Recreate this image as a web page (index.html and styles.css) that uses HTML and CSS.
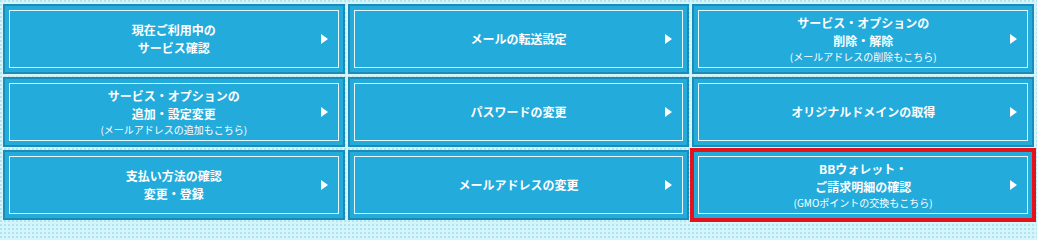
FILE: index.html
```html
<!DOCTYPE html>
<html lang="ja">
<head>
<meta charset="utf-8">
<title>メニュー</title>
<link rel="stylesheet" href="styles.css">
</head>
<body>
<div class="menu">
  <a class="btn" href="#"><span class="inner"><span class="label"><span class="main">現在ご利用中の<br>サービス確認</span></span><span class="arrow"></span></span></a>
  <a class="btn" href="#"><span class="inner"><span class="label"><span class="main">メールの転送設定</span></span><span class="arrow"></span></span></a>
  <a class="btn" href="#"><span class="inner"><span class="label"><span class="main">サービス・オプションの<br>削除・解除</span><span class="sub">(メールアドレスの削除もこちら)</span></span><span class="arrow"></span></span></a>
  <a class="btn" href="#"><span class="inner"><span class="label"><span class="main">サービス・オプションの<br>追加・設定変更</span><span class="sub">(メールアドレスの追加もこちら)</span></span><span class="arrow"></span></span></a>
  <a class="btn" href="#"><span class="inner"><span class="label"><span class="main">パスワードの変更</span></span><span class="arrow"></span></span></a>
  <a class="btn" href="#"><span class="inner"><span class="label"><span class="main">オリジナルドメインの取得</span></span><span class="arrow"></span></span></a>
  <a class="btn" href="#"><span class="inner"><span class="label"><span class="main">支払い方法の確認<br>変更・登録</span></span><span class="arrow"></span></span></a>
  <a class="btn" href="#"><span class="inner"><span class="label"><span class="main">メールアドレスの変更</span></span><span class="arrow"></span></span></a>
  <a class="btn btn-active" href="#"><span class="inner"><span class="label"><span class="main">BBウォレット・<br>ご請求明細の確認</span><span class="sub">(GMOポイントの交換もこちら)</span></span><span class="arrow"></span></span></a>
</div>
</body>
</html>
```

FILE: styles.css
```css
html, body {
  margin: 0;
  padding: 0;
}

html {
  background-color: #d3f5fb;
  background-image: radial-gradient(circle at 1px 1px, #b2e4f0 0.9px, transparent 1.1px);
  background-size: 4px 4px;
}

body {
  width: 1037px;
  height: 226px;
  overflow: hidden;
  font-family: "Noto Sans CJK JP", "Noto Sans", sans-serif;
}

.menu {
  box-sizing: border-box;
  height: 226px;
  display: grid;
  grid-template-columns: repeat(3, 1fr);
  grid-template-rows: repeat(3, 70px);
  gap: 3px;
  padding: 4px 3px 6px 3px;
}

.btn {
  display: block;
  box-sizing: border-box;
  border: 2px solid #1b8cb7;
  background: #23abdc;
  padding: 4px;
  color: #ffffff;
  text-decoration: none;
}

.btn-active {
  outline: 4px solid #e5121c;
  outline-offset: -2px;
  position: relative;
  z-index: 1;
}

.inner {
  box-sizing: border-box;
  height: 100%;
  border: 1px solid #e6f7fc;
  display: grid;
  grid-template-columns: 30px 1fr 30px;
  align-items: center;
}

.label {
  grid-column: 2;
  display: flex;
  flex-direction: column;
  align-items: center;
  text-align: center;
}

.main {
  font-size: 12px;
  line-height: 18px;
  font-weight: bold;
}

.sub {
  font-size: 10px;
  line-height: 14px;
  font-weight: normal;
}

.arrow {
  grid-column: 3;
  justify-self: end;
  margin-right: 10px;
  width: 0;
  height: 0;
  border-left: 7px solid #ffffff;
  border-top: 5px solid transparent;
  border-bottom: 5px solid transparent;
}
```
